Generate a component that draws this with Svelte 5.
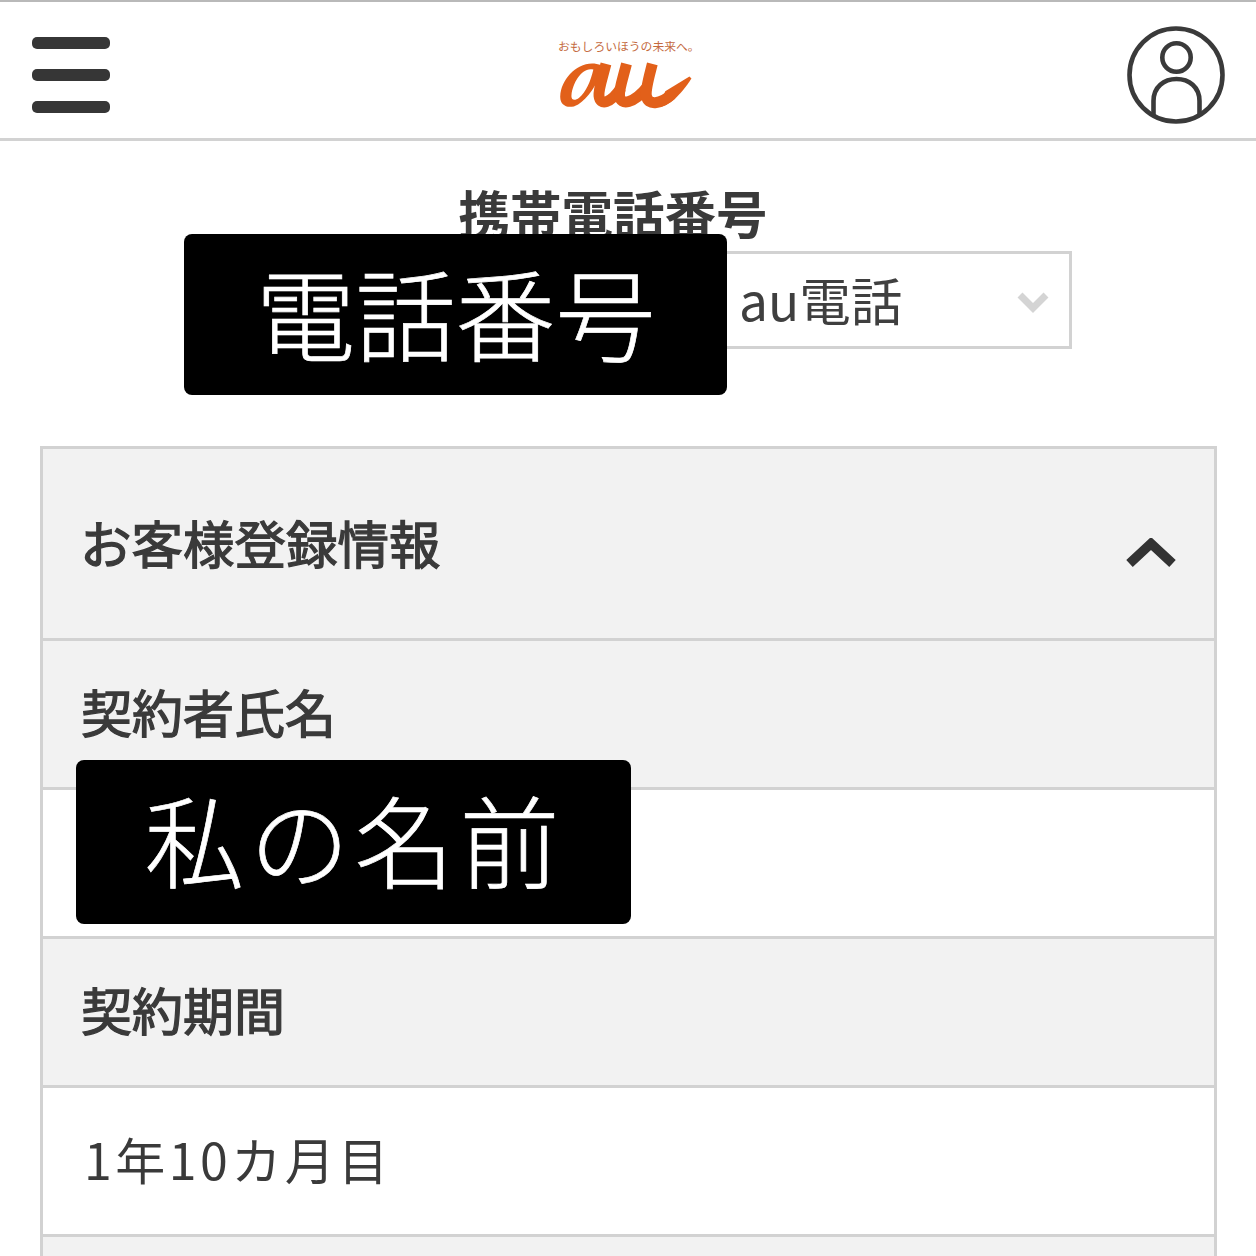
<script>
  const rows = [
    { label: '契約者氏名', value: '' },
    { label: '契約期間', value: '1年10カ月目' }
  ];
</script>

<div class="page">
  <header class="header">
    <button class="menu" aria-label="メニュー"><span></span><span></span><span></span></button>
    <div class="brand">
      <div class="tagline">おもしろいほうの未来へ。</div>
      <svg class="au" viewBox="80 100 410 160" aria-label="au">
        <path fill="#e2601a" fill-rule="evenodd" d="M212 122C150 98 90 160 88 215C86 246 115 256 142 240C172 222 198 180 216 136ZM188 135C155 125 125 175 122 212C120 228 132 230 145 220C165 205 180 170 188 135Z" />
        <g fill="none" stroke="#e2601a">
          <path stroke-width="33" d="M226 118C214 165 203 195 205 214C208 245 240 238 272 190" />
          <path stroke-width="33" d="M288 118C276 165 265 195 267 214C270 245 310 238 352 186" />
          <path stroke-width="33" d="M366 118C354 165 345 195 348 214C352 245 390 240 425 210" />
        </g>
        <path fill="#e2601a" d="M405 200L478 156L484 162C450 215 410 250 385 248Z" />
      </svg>
    </div>
    <svg class="user" viewBox="0 0 100 100" aria-label="アカウント">
      <g fill="none" stroke="#3a3a3a" stroke-width="4.600">
        <circle cx="50" cy="50" r="46.500" />
        <circle cx="50.500" cy="32.500" r="14.200" />
        <path d="M27.500 91V76C27.500 62 38 54 50.500 54C63 54 73.500 62 73.500 76V91" />
      </g>
    </svg>
  </header>

  <main>
    <h1 class="title">携帯電話番号</h1>
    <div class="line-type">
      <div class="select">
        <span class="select-text">au電話</span>
        <svg class="chev" viewBox="0 0 32 24"><path d="M3 5L16 18L29 5" fill="none" stroke="#d4d4d4" stroke-width="7" /></svg>
      </div>
    </div>

    <section class="panel">
      <div class="panel-head">
        <h2>お客様登録情報</h2>
        <svg class="caret" viewBox="0 0 52 30"><path d="M4.500 25.500L26 5.500L47.500 25.500" fill="none" stroke="#333" stroke-width="9.500" /></svg>
      </div>
      {#each rows as row}
        <div class="row label"><span>{row.label}</span></div>
        <div class="row value"><span>{row.value}</span></div>
      {/each}
      <div class="row label tail"></div>
    </section>
  </main>

  <div class="redact redact-phone">電話番号</div>
  <div class="redact redact-name">私の名前</div>
</div>

<style>
  :global(body) {
    margin: 0;
    background: #fff;
  }
  .page {
    position: relative;
    height: 1256px;
    overflow: hidden;
    background: #fff;
    color: #3a3a3a;
    font-family: "Noto Sans CJK JP", "Noto Sans", sans-serif;
    border-top: 2px solid #b9b9b9;
    box-sizing: border-box;
  }
  .header {
    display: grid;
    grid-template-columns: 1fr auto 1fr;
    align-items: center;
    height: 126px;
    padding: 10px 30px 0 32px;
    border-bottom: 3px solid #d2d2d2;
  }
  .menu {
    display: flex;
    flex-direction: column;
    gap: 20px;
    width: 78px;
    padding: 0;
    border: 0;
    background: none;
  }
  .menu span {
    display: block;
    height: 12px;
    border-radius: 5px;
    background: #363636;
  }
  .brand {
    display: flex;
    flex-direction: column;
    align-items: flex-start;
    width: 142px;
  }
  .tagline {
    font-size: 11.800px;
    line-height: 14px;
    font-weight: 400;
    color: #c46a3e;
    white-space: nowrap;
  }
  .au {
    display: block;
    width: 137px;
    height: 53px;
    margin: 5px 0 0 -1px;
  }
  .user {
    justify-self: end;
    width: 100px;
    height: 100px;
  }
  .title {
    margin: 0;
    padding: 41px 30px 0 0;
    text-align: center;
    font-size: 51.500px;
    line-height: 60px;
    font-weight: 700;
    color: #3a3a3a;
  }
  .line-type {
    display: flex;
    justify-content: flex-end;
    padding: 9px 184px 0 0;
  }
  .select {
    display: flex;
    align-items: center;
    justify-content: space-between;
    width: 370px;
    height: 98px;
    padding: 0 20px 0 34px;
    box-sizing: border-box;
    border: 3px solid #d2d2d2;
    font-size: 51.500px;
    color: #3f3f3f;
  }
  .select-text {
    margin-bottom: 4px;
  }
  .chev {
    width: 32px;
    height: 24px;
    margin-top: 4px;
  }
  .panel {
    margin: 97px 39px 0 40px;
    border: 3px solid #d2d2d2;
    border-bottom: 0;
  }
  .panel-head {
    display: flex;
    align-items: center;
    justify-content: space-between;
    height: 189px;
    padding: 0 37px 0 37px;
    background: #f2f2f2;
    border-bottom: 3px solid #d2d2d2;
  }
  h2 {
    margin: -4px 0 0;
    font-size: 51.500px;
    line-height: 60px;
    font-weight: 400;
    -webkit-text-stroke: 1.300px #3a3a3a;
  }
  .caret {
    width: 52px;
    height: 30px;
    margin-top: 18px;
  }
  .row {
    display: flex;
    align-items: center;
    height: 146px;
    padding: 0 39px;
    border-bottom: 3px solid #d2d2d2;
    font-size: 51px;
    line-height: 60px;
  }
  .row span {
    margin-top: -6px;
  }
  .label {
    background: #f2f2f2;
    font-weight: 400;
    -webkit-text-stroke: 1.300px #3a3a3a;
    padding-left: 38px;
  }
  .value {
    background: #fff;
    font-size: 50px;
    font-weight: 400;
    letter-spacing: 3.500px;
    padding-left: 41px;
  }
  .tail {
    border-bottom: 0;
  }
  .redact {
    position: absolute;
    display: flex;
    align-items: center;
    justify-content: center;
    box-sizing: border-box;
    background: #000;
    border-radius: 8px;
    color: #fff;
    font-size: 100px;
    line-height: 1;
    font-weight: 300;
    -webkit-text-stroke: 0.700px #fff;
    white-space: nowrap;
  }
  .redact-phone {
    left: 184px;
    top: 232px;
    width: 543px;
    height: 161px;
    padding-bottom: 8px;
  }
  .redact-name {
    left: 76px;
    top: 758px;
    width: 555px;
    height: 164px;
    padding: 0 0 9px 2px;
    letter-spacing: 5px;
  }
</style>
